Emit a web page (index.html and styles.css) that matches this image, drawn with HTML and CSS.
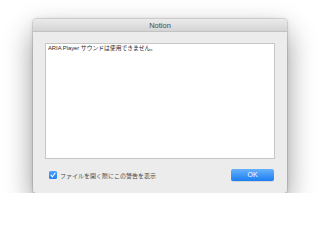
FILE: index.html
```html
<!DOCTYPE html>
<html lang="ja">
<head>
<meta charset="utf-8">
<title>Notion</title>
<link rel="stylesheet" href="styles.css">
</head>
<body>
<div class="window">
  <div class="titlebar">Notion</div>
  <div class="content">
    <div class="message">ARIA Player サウンドは使用できません。</div>
    <div class="footer">
      <label class="check">
        <span class="box"><svg viewBox="0 0 8 8" width="8" height="8"><path d="M2 4.2 L3.4 5.8 L6 2.2" fill="none" stroke="#fff" stroke-width="1.1" stroke-linecap="round" stroke-linejoin="round"/></svg></span>
        <span class="label">ファイルを開く際にこの警告を表示</span>
      </label>
      <button class="ok">OK</button>
    </div>
  </div>
</div>
</body>
</html>
```
FILE: styles.css
```css
html, body {
  margin: 0;
  background: #ffffff;
}
body {
  padding: 19px 0 0 33px;
  font-family: "Liberation Sans", "Noto Sans CJK JP", sans-serif;
}
.window {
  width: 254px;
  height: 174px;
  background: #ececec;
  border-radius: 3px;
  box-shadow: 0 12px 28px rgba(0,0,0,0.42), 0 0 4px rgba(0,0,0,0.12), 0 0 0 0.5px rgba(0,0,0,0.2);
  display: flex;
  flex-direction: column;
  overflow: hidden;
}
.titlebar {
  height: 13px;
  line-height: 13px;
  text-align: center;
  font-size: 7.5px;
  color: #4a4a4a;
  background: linear-gradient(#ebebeb, #d4d4d4);
  border-bottom: 1px solid #c2c2c2;
  box-sizing: border-box;
  flex: none;
}
.content {
  flex: 1;
  display: flex;
  flex-direction: column;
  padding: 11px 12px 12px 12px;
}
.message {
  height: 116px;
  box-sizing: border-box;
  background: #fff;
  border: 1px solid #c6c6c6;
  padding: 1px 2px;
  font-size: 5.8px;
  line-height: 7px;
  color: #2a2a2a;
}
.footer {
  display: flex;
  align-items: center;
  justify-content: space-between;
  margin-top: 10px;
}
.check {
  display: flex;
  align-items: center;
  gap: 3px;
  padding-left: 4px;
}
.box {
  width: 8px;
  height: 8px;
  border-radius: 1.5px;
  background: linear-gradient(#4ea2fb, #1f7ff1);
  display: flex;
}
.label {
  font-size: 6px;
  color: #4a4a4a;
  font-family: "Noto Sans CJK JP", sans-serif;
}
.ok {
  width: 43px;
  height: 12px;
  margin: 0 1px 0 0;
  padding: 0;
  border: none;
  border-radius: 2px;
  background: linear-gradient(#68b1fc, #1b7ef2);
  color: #fff;
  font-family: "Liberation Sans", sans-serif;
  font-size: 7px;
  line-height: 12px;
  box-shadow: 0 0.5px 0.5px rgba(0,0,0,0.2);
}
```
